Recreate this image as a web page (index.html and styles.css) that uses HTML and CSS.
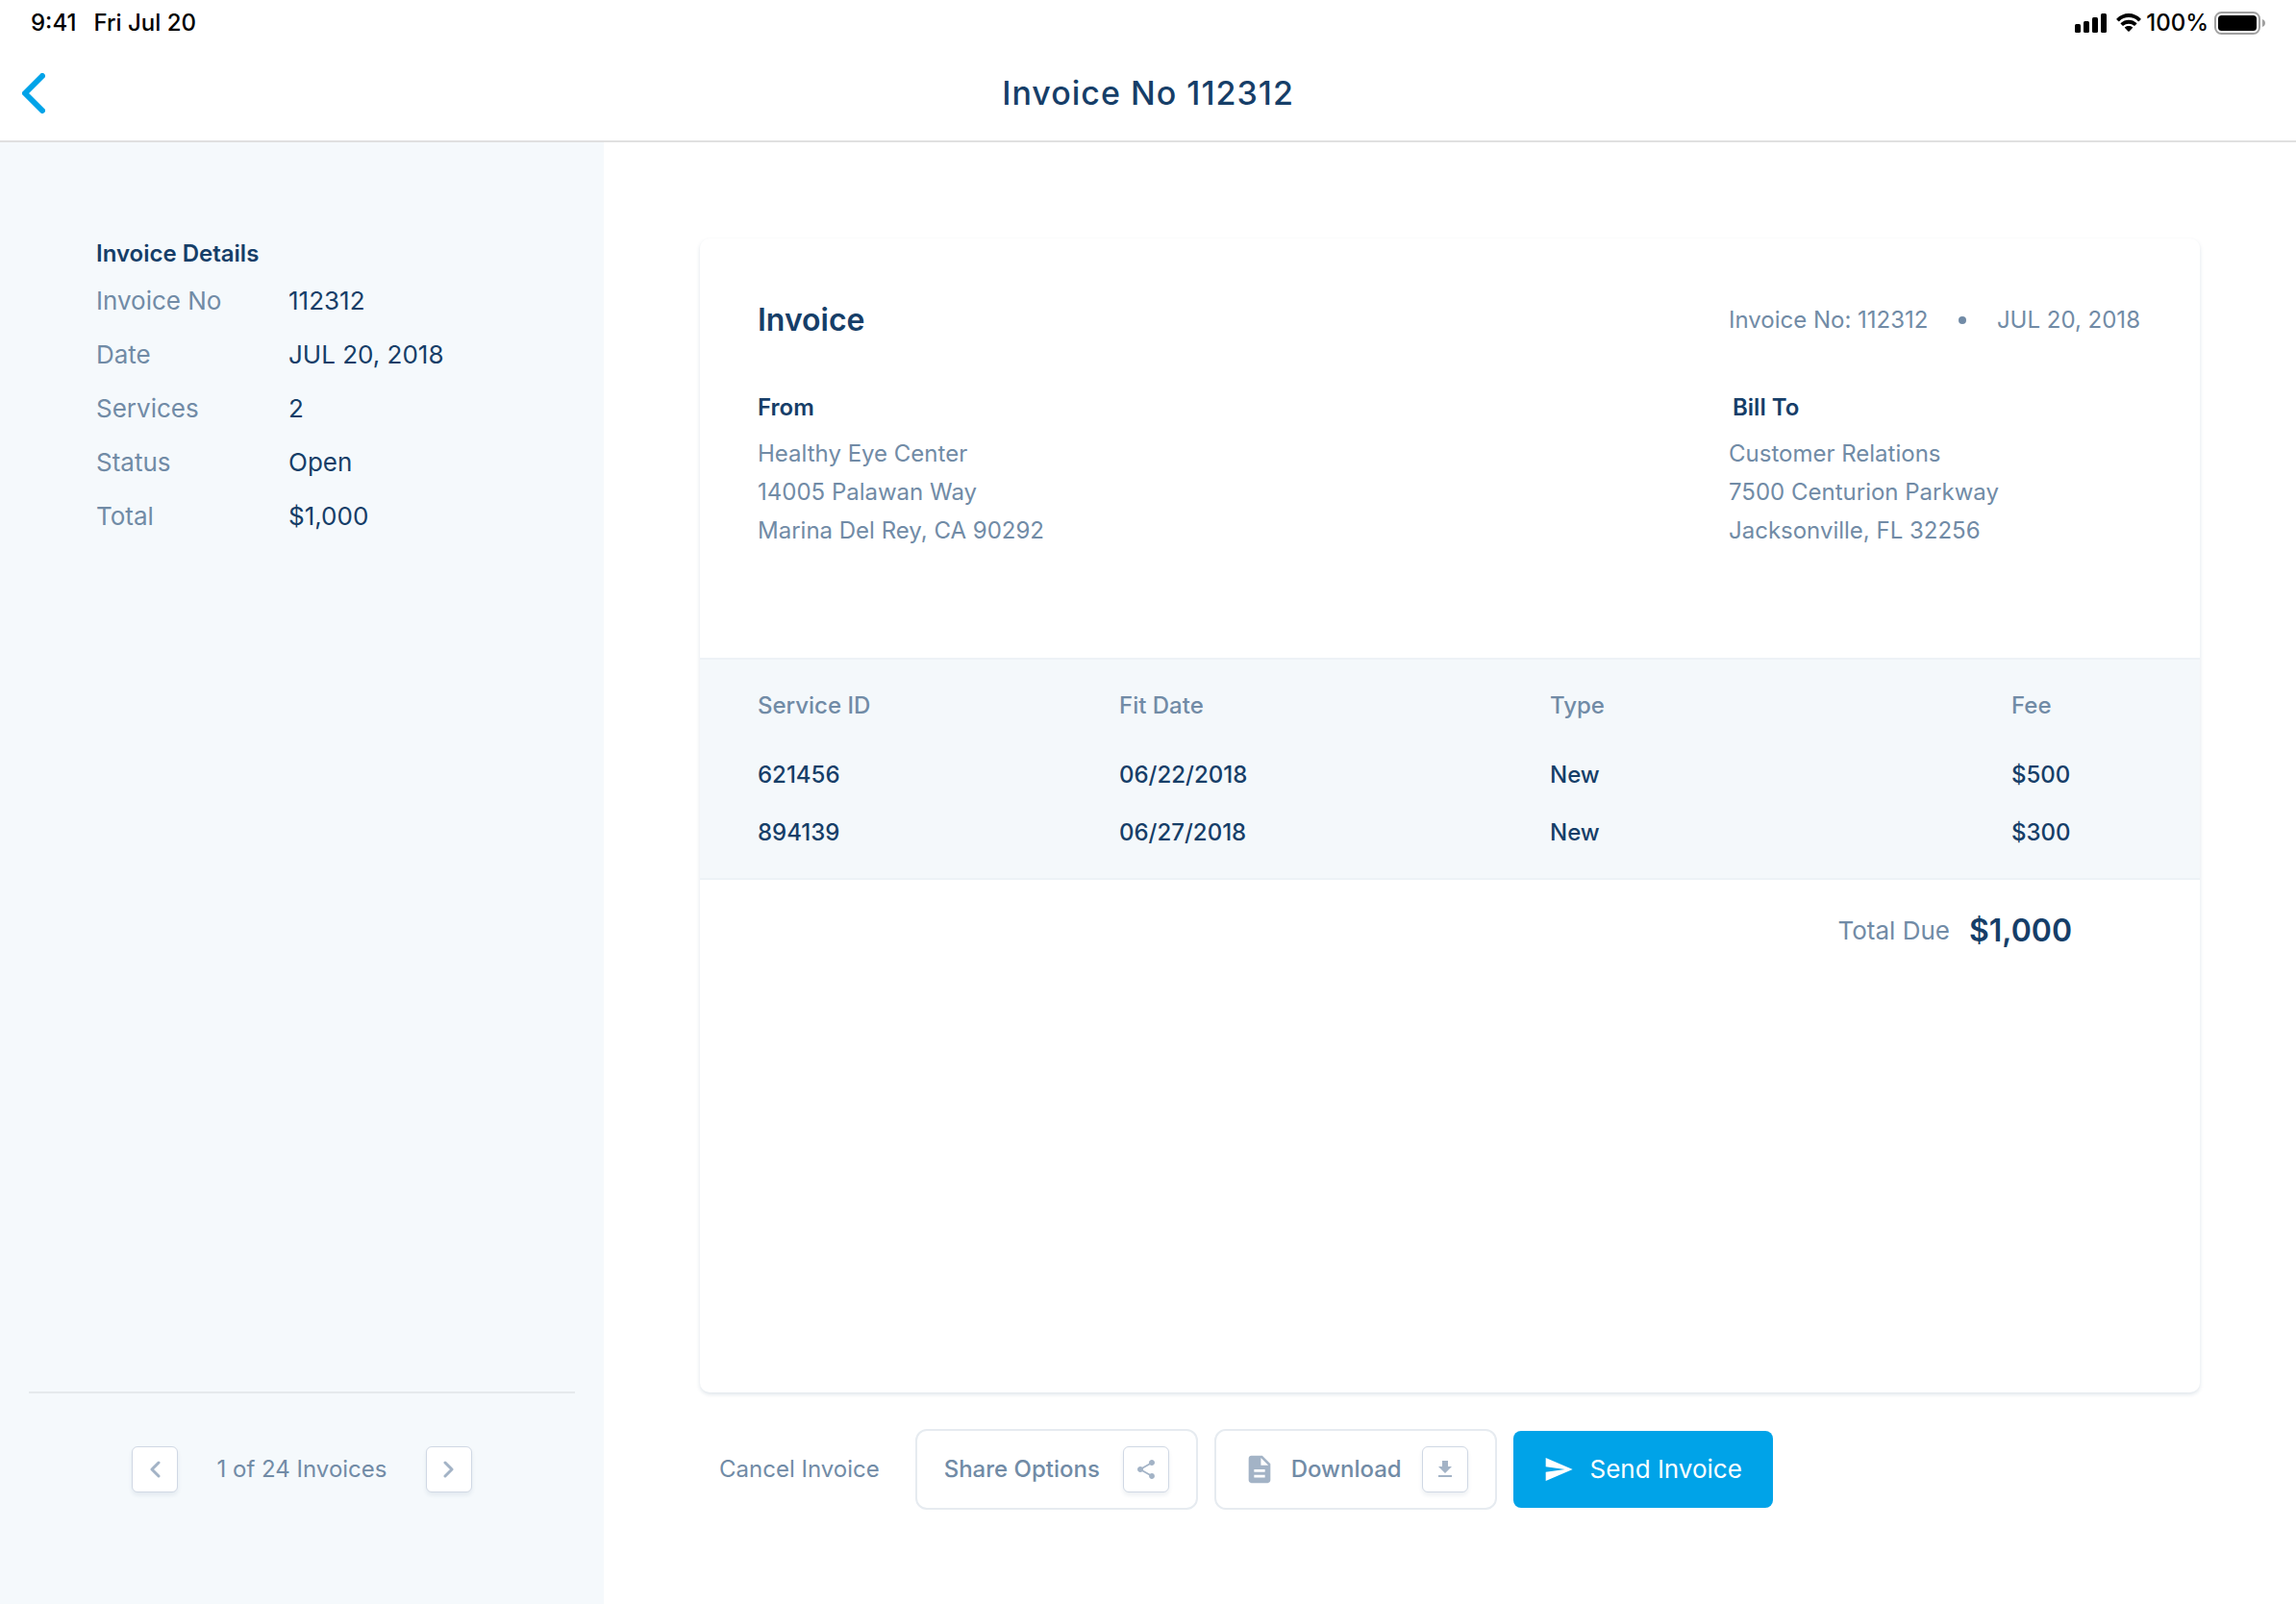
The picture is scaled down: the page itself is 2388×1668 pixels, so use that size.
FILE: index.html
```html
<!DOCTYPE html>
<html lang="en">
<head>
<meta charset="utf-8">
<meta name="viewport" content="width=device-width, initial-scale=1">
<title>Invoice No 112312</title>
<link rel="stylesheet" href="styles.css">
</head>
<body>
<div class="app">
  <div class="status-bar">
    <div class="status-left"><span>9:41</span><span>Fri Jul 20</span></div>
    <div class="status-right">
      <svg class="signal" width="34" height="20" viewBox="0 0 34 20" aria-hidden="true">
        <rect x="0" y="11" width="6" height="9" rx="1.5"/><rect x="9" y="8" width="6" height="12" rx="1.5"/><rect x="18" y="4" width="6" height="16" rx="1.5"/><rect x="27" y="0" width="6" height="20" rx="1.5"/>
      </svg>
      <svg class="wifi" width="28" height="20" viewBox="0 0 28 20" aria-hidden="true">
        <path d="M14 4.1c3.8 0 7.3 1.5 9.9 4.1.2.2.5.2.7 0l2-2c.2-.2.2-.6 0-.8C23 1.9 18.600 0 14 0S5 1.900 1.400 5.400c-.2.2-.2.600 0 .8l2 2c.2.2.5.2.7 0C6.700 5.600 10.200 4.100 14 4.100z"/>
        <path d="M14 10.700c2.100 0 4.100.8 5.600 2.100.2.2.5.2.7 0l2-2c.2-.2.2-.6 0-.8-2.300-2.100-5.200-3.300-8.300-3.300s-6 1.200-8.300 3.300c-.2.2-.2.600 0 .8l2 2c.2.2.5.2.7 0 1.500-1.300 3.500-2.100 5.600-2.100z"/>
        <path d="M18 15.100c.2-.2.2-.6 0-.8-2.300-1.900-5.700-1.900-8 0-.2.200-.2.600 0 .8l3.600 3.600c.2.200.6.200.8 0z"/>
      </svg>
      <span>100%</span>
      <svg class="battery" width="53" height="24" viewBox="0 0 53 24" aria-hidden="true">
        <rect x="1" y="1" width="46" height="22" rx="6.500" fill="none" stroke="#a0a0a0" stroke-width="2"/>
        <rect x="4" y="4" width="40" height="16" rx="3.500"/>
        <path d="M50 8c2 .7 3 2.200 3 4s-1 3.300-3 4z" fill="#a0a0a0"/>
      </svg>
    </div>
  </div>

  <header class="nav">
    <button class="back" type="button" aria-label="Back">
      <svg width="24" height="42" viewBox="0 0 24 42" aria-hidden="true"><path d="M21 3L3 21l18 18"/></svg>
    </button>
    <h1>Invoice No 112312</h1>
  </header>

  <div class="body">
    <aside class="sidebar">
      <h2>Invoice Details</h2>
      <dl class="details">
        <dt>Invoice No</dt><dd>112312</dd>
        <dt>Date</dt><dd>JUL 20, 2018</dd>
        <dt>Services</dt><dd>2</dd>
        <dt>Status</dt><dd>Open</dd>
        <dt>Total</dt><dd>$1,000</dd>
      </dl>
      <nav class="pager" aria-label="Invoices">
        <button class="icon-box" type="button" aria-label="Previous invoice">
          <svg width="12" height="18" viewBox="0 0 12 18" aria-hidden="true"><path class="chevron" d="M10 2L3 9l7 7"/></svg>
        </button>
        <span>1 of 24 Invoices</span>
        <button class="icon-box" type="button" aria-label="Next invoice">
          <svg width="12" height="18" viewBox="0 0 12 18" aria-hidden="true"><path class="chevron" d="M2 2l7 7-7 7"/></svg>
        </button>
      </nav>
    </aside>

    <main class="main">
      <article class="card">
        <div class="card-head">
          <h2>Invoice</h2>
          <p class="meta"><span>Invoice No: 112312</span><span class="dot"></span><span>JUL 20, 2018</span></p>
        </div>
        <div class="parties">
          <section>
            <h3>From</h3>
            <address>Healthy Eye Center<br>14005 Palawan Way<br>Marina Del Rey, CA 90292</address>
          </section>
          <section>
            <h3 class="bill-to">Bill To</h3>
            <address>Customer Relations<br>7500 Centurion Parkway<br>Jacksonville, FL 32256</address>
          </section>
        </div>
        <div class="services">
          <table>
            <colgroup><col class="col-id"><col class="col-date"><col class="col-type"><col></colgroup>
            <thead><tr><th scope="col">Service ID</th><th scope="col">Fit Date</th><th scope="col">Type</th><th scope="col">Fee</th></tr></thead>
            <tbody>
              <tr><td>621456</td><td>06/22/2018</td><td>New</td><td>$500</td></tr>
              <tr><td>894139</td><td>06/27/2018</td><td>New</td><td>$300</td></tr>
            </tbody>
          </table>
        </div>
        <p class="total"><span>Total Due</span><strong>$1,000</strong></p>
      </article>

      <div class="actions">
        <a class="cancel" href="#">Cancel Invoice</a>
        <button class="action" type="button">
          <span class="label">Share Options</span>
          <span class="icon-box"><svg width="24" height="24" viewBox="0 0 24 24" aria-hidden="true"><path d="M18 16.080c-.76 0-1.440.3-1.960.770L8.910 12.700c.05-.23.09-.46.09-.7s-.04-.47-.09-.7l7.050-4.110c.54.5 1.250.81 2.040.81 1.660 0 3-1.340 3-3s-1.340-3-3-3-3 1.340-3 3c0 .24.04.47.09.7L8.040 9.810C7.500 9.310 6.790 9 6 9c-1.660 0-3 1.340-3 3s1.340 3 3 3c.79 0 1.500-.31 2.040-.81l7.120 4.160c-.05.21-.08.43-.08.650 0 1.610 1.310 2.920 2.920 2.920s2.920-1.310 2.920-2.920-1.310-2.920-2.920-2.920z"/></svg></span>
        </button>
        <button class="action" type="button">
          <svg class="doc" width="34" height="34" viewBox="0 0 24 24" aria-hidden="true"><path d="M14 2H6c-1.100 0-1.990.9-1.990 2L4 20c0 1.100.89 2 1.990 2H18c1.100 0 2-.9 2-2V8l-6-6zm2 16H8v-2h8v2zm0-4H8v-2h8v2zm-3-5V3.500L18.500 9H13z"/></svg>
          <span class="label">Download</span>
          <span class="icon-box"><svg width="24" height="24" viewBox="0 0 24 24" aria-hidden="true"><path d="M19 9h-4V3H9v6H5l7 7 7-7zM5 18v2h14v-2H5z"/></svg></span>
        </button>
        <button class="send" type="button">
          <svg width="32" height="32" viewBox="0 0 24 24" aria-hidden="true"><path d="M2.010 21L23 12 2.010 3 2 10l15 2-15 2z"/></svg>
          <span>Send Invoice</span>
        </button>
      </div>
    </main>
  </div>
</div>
</body>
</html>
```
FILE: styles.css
```css
:root {
  --navy: #163e68;
  --slate: #718ba6;
  --icon: #a3b3c6;
  --blue: #00a3e8;
  --panel: #f5f9fc;
}

* { box-sizing: border-box; }

body {
  margin: 0;
  background: #fff;
  color: var(--slate);
  font-family: Inter, "Liberation Sans", sans-serif;
  font-size: 24px;
  line-height: 32px;
}

h1, h2, h3, p, dl, dd { margin: 0; }

button {
  font: inherit;
  color: inherit;
  background: none;
  border: 0;
  padding: 0;
  cursor: pointer;
}

svg { display: block; flex: none; fill: currentColor; }

.app {
  display: flex;
  flex-direction: column;
  min-height: 100vh;
}

/* Status bar */
.status-bar {
  display: flex;
  justify-content: space-between;
  align-items: center;
  height: 48px;
  padding: 0 32px;
  color: #000;
  font-weight: 500;
}

.status-left { display: flex; gap: 18px; }
.status-right { display: flex; align-items: center; }
.wifi { margin: 0 4px 0 8px; }
.battery { margin-left: 6px; }

/* Navigation */
.nav {
  display: grid;
  grid-template-columns: 1fr auto 1fr;
  align-items: center;
  height: 100px;
  padding: 0 23px;
  border-bottom: 2px solid #e0e0e0;
}

.back { justify-self: start; color: var(--blue); }

.back path {
  fill: none;
  stroke: currentColor;
  stroke-width: 6;
  stroke-linecap: round;
  stroke-linejoin: round;
}

h1 {
  color: var(--navy);
  font-size: 34px;
  font-weight: 500;
  line-height: 40px;
  letter-spacing: 1px;
}

.body {
  display: grid;
  grid-template-columns: 628px 1fr;
  flex: 1;
}

/* Sidebar */
.sidebar {
  display: flex;
  flex-direction: column;
  padding: 100px 30px 116px;
  background: var(--panel);
}

.sidebar h2 {
  padding-left: 70px;
  color: var(--navy);
  font-size: 24px;
  font-weight: 600;
}

.details {
  display: grid;
  grid-template-columns: 200px 1fr;
  margin-top: 5px;
  padding-left: 70px;
  font-size: 26px;
  line-height: 56px;
}

.details dd { color: var(--navy); }

.pager {
  display: flex;
  justify-content: center;
  align-items: center;
  gap: 41px;
  margin-top: auto;
  padding-top: 55px;
  border-top: 2px solid #e5e9ec;
}

.icon-box {
  display: flex;
  justify-content: center;
  align-items: center;
  width: 48px;
  height: 48px;
  background: #fff;
  border: 1px solid #d0d8e4;
  border-radius: 6px;
  box-shadow: 0 3px 4px rgba(22, 62, 104, 0.08);
  color: var(--icon);
}

.chevron {
  fill: none;
  stroke: currentColor;
  stroke-width: 3;
  stroke-linecap: round;
  stroke-linejoin: round;
}

/* Invoice */
.main {
  display: flex;
  flex-direction: column;
  gap: 38px;
  padding: 100px 100px 98px;
}

.card {
  flex: 1;
  padding-top: 65px;
  border-radius: 10px;
  box-shadow: 0 2px 4px rgba(22, 62, 104, 0.14);
}

.card-head,
.parties {
  display: grid;
  grid-template-columns: 1fr 430px;
  padding: 0 60px;
}

.card-head { align-items: center; margin-bottom: 55px; }

.card-head h2 {
  color: var(--navy);
  font-size: 32px;
  font-weight: 600;
  line-height: 40px;
}

.meta {
  display: flex;
  justify-content: space-between;
  align-items: center;
  padding-right: 2px;
}

.dot {
  width: 8px;
  height: 8px;
  border-radius: 50%;
  background: currentColor;
}

h3 {
  margin-bottom: 12px;
  color: var(--navy);
  font-size: 24px;
  font-weight: 600;
}

.bill-to { padding-left: 4px; }

address { font-style: normal; line-height: 40px; }

.services {
  margin-top: 112px;
  padding-bottom: 17px;
  background: #f4f8fb;
  border: 2px solid #edf2f6;
  border-width: 2px 0;
}

table {
  width: 100%;
  table-layout: fixed;
  border-collapse: collapse;
}

.col-id { width: 436px; }
.col-date { width: 448px; }
.col-type { width: 480px; }

th, td {
  padding: 14px 0;
  font-weight: 500;
  text-align: left;
}

th { padding: 32px 0 26px; }
td { color: var(--navy); }
th:first-child, td:first-child { padding-left: 60px; }

.total {
  display: flex;
  justify-content: flex-end;
  align-items: center;
  gap: 20px;
  padding: 33px 133px 33px 60px;
  font-size: 26px;
  line-height: 40px;
}

.total strong {
  color: var(--navy);
  font-size: 32px;
  font-weight: 600;
}

/* Actions */
.actions {
  display: flex;
  align-items: center;
  gap: 17px;
  padding-left: 20px;
}

.cancel {
  margin-right: 20px;
  color: inherit;
  text-decoration: none;
}

.action {
  display: flex;
  align-items: center;
  gap: 16px;
  width: 294px;
  height: 84px;
  padding: 0 28px;
  border: 2px solid #e6ebf0;
  border-radius: 12px;
  font-weight: 500;
}

.label { margin-right: auto; }

.doc { color: var(--icon); }

.send {
  display: flex;
  justify-content: center;
  align-items: center;
  gap: 16px;
  width: 270px;
  height: 80px;
  border-radius: 8px;
  background: var(--blue);
  color: #fff;
  font-size: 26px;
}
```
